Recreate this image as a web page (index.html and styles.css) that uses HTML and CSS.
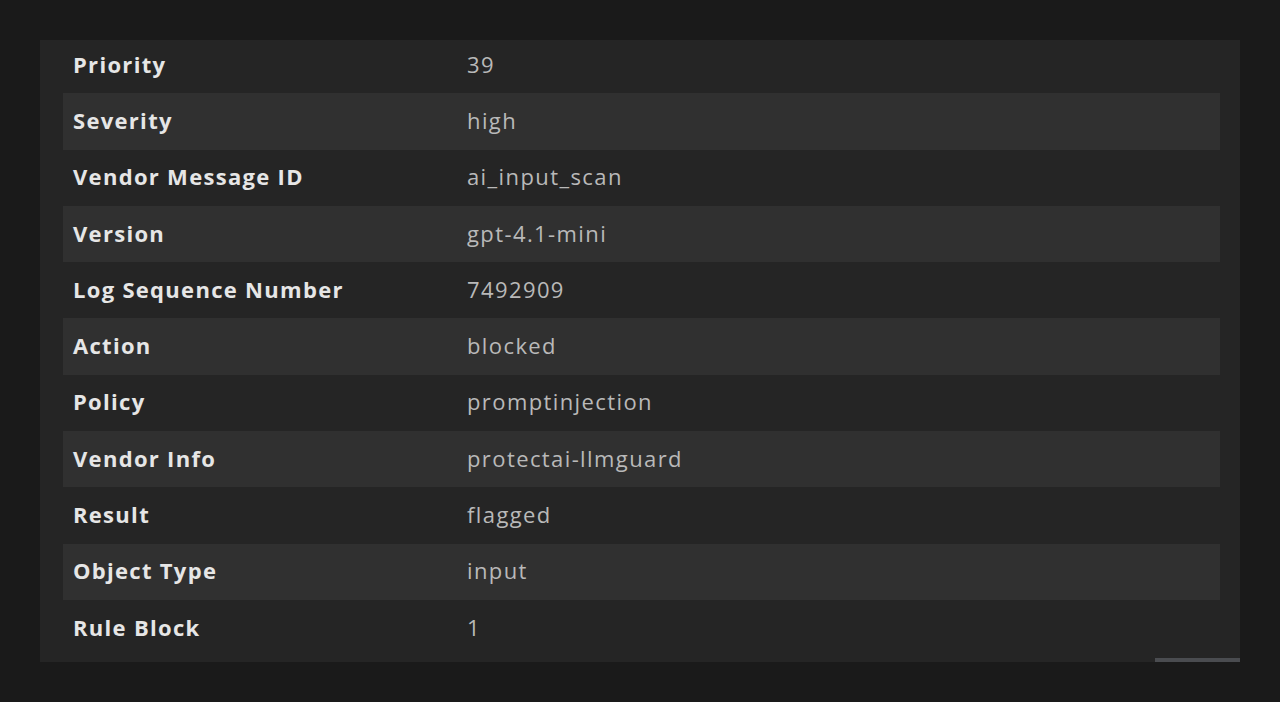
FILE: index.html
```html
<!DOCTYPE html>
<html>
<head>
<meta charset="utf-8">
<link rel="stylesheet" href="styles.css">
</head>
<body>
<div class="panel">
  <div class="scroller">
    <table class="details">
      <tr><th>Priority</th><td>39</td></tr>
      <tr><th>Severity</th><td>high</td></tr>
      <tr><th>Vendor Message ID</th><td>ai_input_scan</td></tr>
      <tr><th>Version</th><td>gpt-4.1-mini</td></tr>
      <tr><th>Log Sequence Number</th><td>7492909</td></tr>
      <tr><th>Action</th><td>blocked</td></tr>
      <tr><th>Policy</th><td>promptinjection</td></tr>
      <tr><th>Vendor Info</th><td>protectai-llmguard</td></tr>
      <tr><th>Result</th><td>flagged</td></tr>
      <tr><th>Object Type</th><td>input</td></tr>
      <tr><th>Rule Block</th><td>1</td></tr>
    </table>
  </div>
  <div class="hscroll"><div class="thumb"></div></div>
</div>
</body>
</html>
```

FILE: styles.css
```css
html, body {
  margin: 0;
  padding: 0;
  background: #1a1a1a;
}
body {
  padding: 40px 40px;
  font-family: "Open Sans", "Noto Sans", sans-serif;
}
.panel {
  background: #252525;
  height: 622px;
  display: flex;
  flex-direction: column;
  overflow: hidden;
}
.scroller {
  flex: 1;
  overflow: hidden;
  padding: 0 20px 0 23px;
}
.details {
  width: 100%;
  border-collapse: collapse;
  table-layout: fixed;
  margin-top: -3px;
}
.details tr {
  height: 56.3px;
}
.details tr:nth-child(even) {
  background: #303030;
}
.details th {
  width: 374px;
  text-align: left;
  padding: 0 10px 3px;
  font-weight: 700;
  font-size: 22px;
  letter-spacing: 1.3px;
  color: #e6e6e6;
}
.details td {
  padding: 0 10px 3px;
  font-size: 22px;
  letter-spacing: 1.4px;
  color: #b9b9b9;
}
.hscroll {
  height: 4px;
  display: flex;
  justify-content: flex-end;
}
.thumb {
  width: 85px;
  background: #4a4c50;
}
```
